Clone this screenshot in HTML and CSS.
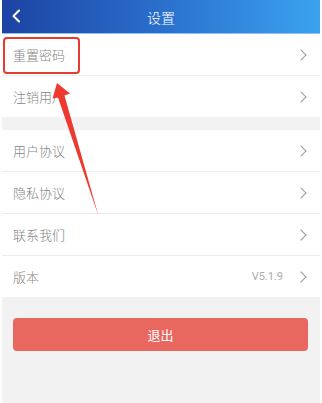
FILE: index.html
```html
<!DOCTYPE html>
<html lang="zh">
<head>
    <meta charset="UTF-8">
    <meta name="viewport" content="width=device-width, initial-scale=1.0">
    <title>设置</title>
    <link rel="stylesheet" href="styles.css">
</head>
<body>
    <div class="page">
        <div class="header">
            <svg class="back" width="10" height="14" viewBox="0 0 10 14"><path d="M8 1.5 L2.5 7 L8 12.5" fill="none" stroke="#fff" stroke-width="2" stroke-linecap="round" stroke-linejoin="round"/></svg>
            <span class="title">设置</span>
        </div>
        <div class="group">
            <div class="row"><span class="label">重置密码</span><span class="arrow"></span></div>
            <div class="row"><span class="label">注销用户</span><span class="arrow"></span></div>
        </div>
        <div class="group">
            <div class="row"><span class="label">用户协议</span><span class="arrow"></span></div>
            <div class="row"><span class="label">隐私协议</span><span class="arrow"></span></div>
            <div class="row"><span class="label">联系我们</span><span class="arrow"></span></div>
            <div class="row"><span class="label">版本</span><span class="version">V5.1.9</span><span class="arrow"></span></div>
        </div>
        <div class="logout">退出</div>

        <!-- annotation drawn over the screenshot -->
        <div class="mark"></div>
        <svg class="pointer" width="322" height="403" viewBox="0 0 322 403">
            <polygon points="57,83 70,93.5 64.5,95.5 98.5,216 58,97.5 52.5,98.5" fill="#ee3a2e"/>
        </svg>
    </div>
</body>
</html>
```

FILE: styles.css
```css
body {
    margin: 0;
    background: #fff;
    font-family: "Noto Sans CJK SC", "Noto Sans", sans-serif;
}
.page {
    position: relative;
    margin: 0 2px;
    height: 403px;
    background: #f2f2f2;
    overflow: hidden;
}
.header {
    position: relative;
    height: 34px;
    display: flex;
    align-items: center;
    justify-content: center;
    background: linear-gradient(90deg, #1d43a3 0%, #2a6fcc 50%, #3ba3f0 100%);
    border-bottom: 1px solid #8fc3ee;
    box-sizing: border-box;
}
.back {
    position: absolute;
    left: 9px;
    top: 9px;
}
.title {
    color: #fff;
    font-size: 14px;
    font-weight: 300;
}
.group {
    background: #fff;
    margin-bottom: 13px;
}
.row {
    height: 41px;
    display: flex;
    align-items: center;
    padding: 0 13px 0 11px;
    border-bottom: 1px solid #ececec;
}
.row:last-child {
    border-bottom: none;
}
.label {
    flex: 1;
    font-size: 13px;
    font-weight: 300;
    color: #858585;
}
.version {
    font-family: "Roboto", "Liberation Sans", sans-serif;
    font-size: 11px;
    color: #aaa;
    margin-right: 14px;
}
.arrow {
    width: 7px;
    height: 7px;
    border-top: 1.2px solid #999;
    border-right: 1.2px solid #999;
    transform: rotate(45deg);
    margin-right: 2px;
}
.group:last-of-type {
    margin-bottom: 0;
}
.logout {
    margin: 21px 12px 0 11px;
    height: 33px;
    border-radius: 4px;
    background: #e8675e;
    color: #fff;
    font-size: 13px;
    display: flex;
    align-items: center;
    justify-content: center;
}
.mark {
    position: absolute;
    left: 1px;
    top: 37px;
    width: 73px;
    height: 33px;
    border: 2.5px solid #e63b2f;
    border-radius: 4px;
}
.pointer {
    position: absolute;
    left: -2px;
    top: 0;
}
```
